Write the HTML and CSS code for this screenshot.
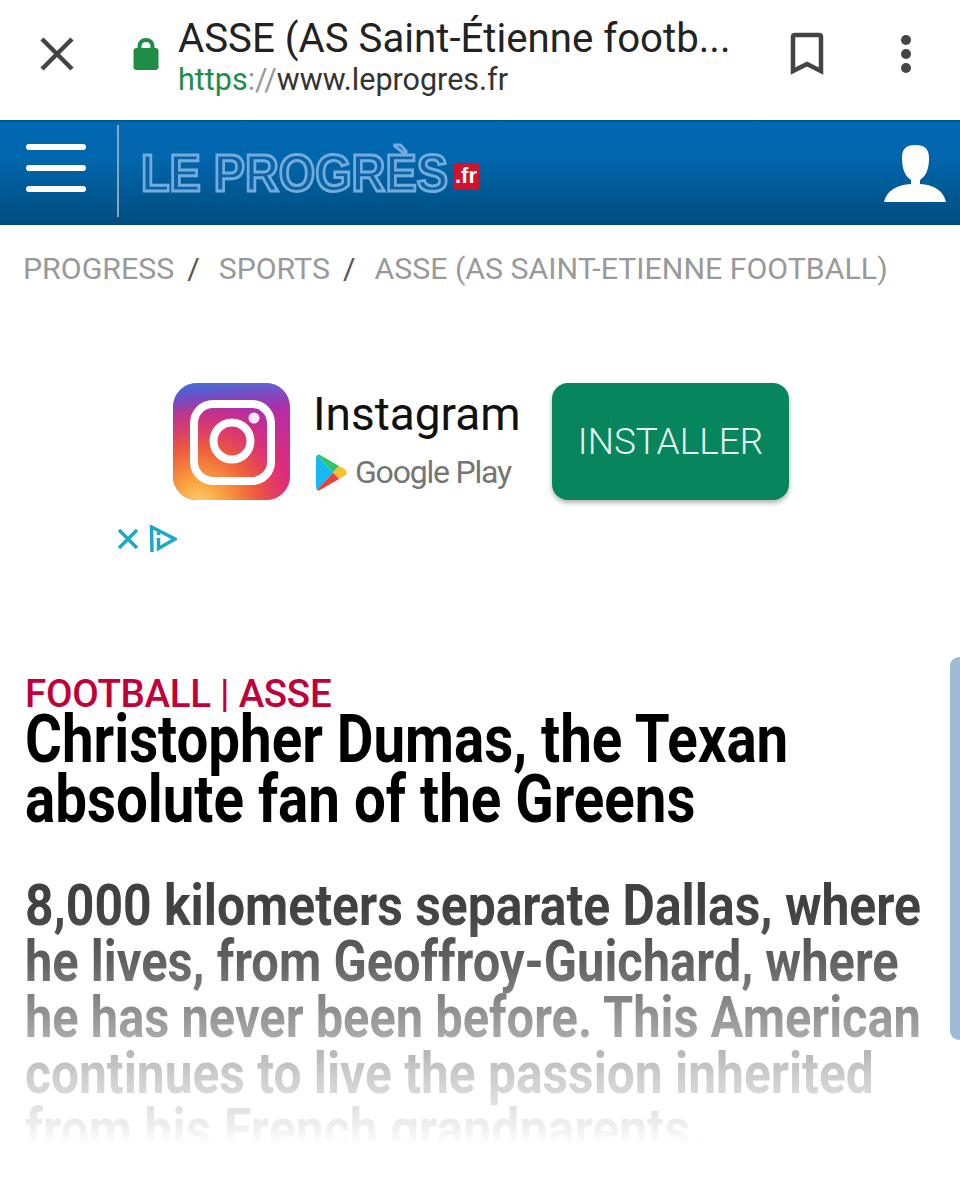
FILE: index.html
```html
<!DOCTYPE html>
<html>
<head>
  <meta charset="UTF-8">
  <title>ASSE (AS Saint-Étienne football)</title>
  <link rel="stylesheet" href="styles.css">
</head>
<body>
  <div class="toolbar">
    <svg class="icon-close" width="34" height="34" viewBox="0 0 34 34"><path d="M2 2 L32 32 M32 2 L2 32"/></svg>
    <svg class="icon-lock" width="26" height="33" viewBox="0 0 26 33">
      <path class="shackle" d="M6.5 13 V9.5 C6.5 5.5 9 3 13 3 C17 3 19.5 5.5 19.5 9.5 V13"/>
      <rect x="0.5" y="11" width="25" height="22" rx="3"/>
    </svg>
    <div class="toolbar-text">
      <div class="page-title">ASSE (AS Saint-Étienne footb...</div>
      <div class="page-url"><span class="scheme">https</span><span class="sep">://</span>www.leprogres.fr</div>
    </div>
    <svg class="icon-bookmark" width="34" height="44" viewBox="0 0 34 44"><path d="M3 39 V5 Q3 3 5 3 H29 Q31 3 31 5 V39 L17 32 Z"/></svg>
    <div class="dots"><span></span><span></span><span></span></div>
  </div>

  <header class="site-header">
    <div class="burger"><span></span><span></span><span></span></div>
    <div class="logo"><span class="logo-text">LE PROGRÈS</span><span class="logo-fr">.fr</span></div>
    <svg class="icon-user" width="62" height="58" viewBox="0 0 62 58">
      <path d="M31 0 C41 0 45 4 45 13 C45 24 42 31 36 35 V39 C50 40 59 45 62 57 H0 C3 45 13 40 27 39 V35 C21 31 18 24 18 13 C18 4 22 0 31 0 Z"/>
    </svg>
  </header>

  <nav class="breadcrumb">
    <a>PROGRESS</a><i>/</i><a>SPORTS</a><i>/</i><a>ASSE (AS SAINT-ETIENNE FOOTBALL)</a>
  </nav>

  <section class="ad">
    <div class="ad-row">
      <svg class="insta" width="117" height="117" viewBox="0 0 117 117">
        <defs>
          <linearGradient id="insta-base" x1="0.1" y1="0" x2="0.9" y2="0.75">
            <stop offset="0" stop-color="#5a4fcf"/>
            <stop offset="0.45" stop-color="#a32eb0"/>
            <stop offset="1" stop-color="#d42a8e"/>
          </linearGradient>
          <radialGradient id="insta-warm" cx="0.22" cy="1.05" r="1">
            <stop offset="0" stop-color="#fed373"/>
            <stop offset="0.22" stop-color="#f9a23c"/>
            <stop offset="0.5" stop-color="#ee5a3c"/>
            <stop offset="0.78" stop-color="#e22f70" stop-opacity="0.7"/>
            <stop offset="1" stop-color="#d42a8e" stop-opacity="0"/>
          </radialGradient>
          <linearGradient id="insta-top" x1="0" y1="0" x2="0" y2="0.25">
            <stop offset="0" stop-color="#3c7fdc" stop-opacity="0.7"/>
            <stop offset="1" stop-color="#5a4fcf" stop-opacity="0"/>
          </linearGradient>
        </defs>
        <rect width="117" height="117" rx="24" fill="url(#insta-base)"/>
        <rect width="117" height="117" rx="24" fill="url(#insta-warm)"/>
        <rect width="117" height="117" rx="24" fill="url(#insta-top)"/>
        <rect x="21" y="21" width="77" height="77" rx="19" class="insta-line"/>
        <circle cx="59" cy="58" r="18.5" class="insta-line"/>
        <circle cx="81" cy="35" r="5.5" fill="#fff" opacity="0.9"/>
      </svg>
      <div class="ad-text">
        <div class="ad-name">Instagram</div>
        <div class="ad-store">
          <svg width="31" height="37" viewBox="0 0 31 37">
            <path d="M1 1 L17 18.5 L1 36 Q0 35 0 33 V4 Q0 2 1 1 Z" fill="#16b9f4"/>
            <path d="M1 1 Q2 0 4 1 L23 12 L17 18.5 Z" fill="#2fc46b"/>
            <path d="M23 12 L30 16 Q31.5 18.5 30 21 L23 25 L17 18.5 Z" fill="#fbc02d"/>
            <path d="M1 36 Q2 37 4 36 L23 25 L17 18.5 Z" fill="#e8413e"/>
          </svg>
          <span>Google Play</span>
        </div>
      </div>
      <div class="ad-button">INSTALLER</div>
    </div>
    <div class="ad-badges">
      <svg width="22" height="22" viewBox="0 0 22 22"><path d="M2 2 L20 20 M20 2 L2 20"/></svg>
      <svg width="28" height="28" viewBox="0 0 28 28">
        <path d="M3 27 L2.5 2 L26 14 L9.5 23.5 V13"/>
        <path d="M9.5 7 V10"/>
      </svg>
    </div>
  </section>

  <article class="article">
    <div class="kicker">FOOTBALL | ASSE</div>
    <h1 class="headline">
      <span>Christopher Dumas, the Texan</span>
      <span>absolute fan of the Greens</span>
    </h1>
    <div class="lede">
      <span>8,000 kilometers separate Dallas, where</span>
      <span>he lives, from Geoffroy-Guichard, where</span>
      <span>he has never been before. This American</span>
      <span>continues to live the passion inherited</span>
      <span>from his French grandparents.</span>
    </div>
  </article>

  <div class="scroll-thumb"></div>
</body>
</html>
```

FILE: styles.css
```css
html, body { height: 1200px; overflow: hidden; }
body { margin: 0; background: #fff; font-family: Roboto, "Liberation Sans", sans-serif; color: #222; }

/* browser toolbar */
.toolbar { height: 120px; display: flex; align-items: center; box-sizing: border-box; padding-left: 40px; }
.icon-close { margin-top: -12px; flex: none; }
.icon-close path { fill: none; stroke: #444; stroke-width: 4.5; }
.icon-lock { margin: -14px 0 0 59px; flex: none; }
.icon-lock rect { fill: #1e8e47; }
.icon-lock .shackle { fill: none; stroke: #1e8e47; stroke-width: 4; }
.toolbar-text { margin-left: 19px; width: 589px; flex: none; }
.page-title { font-size: 40.2px; line-height: 44px; color: #222; white-space: nowrap; margin-top: -5px; }
.page-url { font-size: 30.5px; line-height: 38px; color: #333; }
.scheme { color: #1e8e47; }
.sep { color: #999; }
.icon-bookmark { margin: -12px 0 0 23px; flex: none; }
.icon-bookmark path { fill: none; stroke: #444; stroke-width: 4.5; }
.dots { margin: -12px 0 0 77px; display: flex; flex-direction: column; gap: 4px; }
.dots span { width: 10px; height: 10px; border-radius: 50%; background: #444; }

/* site header */
.site-header { height: 105px; display: flex; align-items: center; box-sizing: border-box; padding-left: 26px; background: linear-gradient(#0069b4 0%, #0066ad 35%, #004d7c 100%); border-top: 2px solid #00558a; }
.burger { width: 60px; display: flex; flex-direction: column; gap: 15px; flex: none; margin-top: -12px; filter: blur(0.6px); }
.burger span { height: 6px; border-radius: 3px; background: #fff; }
.logo { margin-left: 31px; border-left: 2px solid #8aa4ba; height: 92px; padding: 4px 0 0 22px; display: flex; align-items: center; flex: none; width: 767px; box-sizing: border-box; align-self: flex-start; margin-top: 3px; }
.logo-text { font-family: "Liberation Sans", sans-serif; font-weight: 700; font-size: 52px; color: #0d62a6; -webkit-text-stroke: 3px #72acdc; white-space: nowrap; transform: scaleX(0.9); transform-origin: left; margin-right: -34px; filter: blur(0.5px); }
.logo-fr { font-family: "Liberation Sans", sans-serif; font-weight: 700; font-size: 22px; color: #fff; background: #d0122b; border-radius: 3px; padding: 1px 2px 2px; margin: 6px 0 0 5px; line-height: 24px; }
.icon-user { fill: #fff; flex: none; }

/* breadcrumb */
.breadcrumb { height: 86px; padding-bottom: 2px; display: flex; align-items: center; padding-left: 23px; font-size: 30.3px; color: #999; white-space: nowrap; }
.breadcrumb i { font-style: normal; color: #555; margin: 0 19px 0 13px; }

/* ad block */
.ad { height: 363px; padding-top: 70px; box-sizing: border-box; }
.ad-row { display: flex; padding-left: 173px; height: 117px; }
.insta-line { fill: none; stroke: #fff; stroke-width: 8; }
.ad-text { margin-left: 23px; width: 239px; flex: none; }
.ad-name { font-size: 46px; line-height: 62px; color: #111; }
.ad-store { display: flex; align-items: center; margin-top: 8px; gap: 8px; margin-left: 3px; font-size: 32px; letter-spacing: -1.2px; color: #757575; }
.ad-button { width: 237px; height: 117px; display: flex; align-items: center; justify-content: center; border-radius: 16px; background: #07855d; color: #e6f5ef; font-size: 37px; font-weight: 300; box-shadow: 0 3px 5px rgba(0, 0, 0, 0.3); }
.ad-badges { display: flex; align-items: center; gap: 10px; margin: 25px 0 0 117px; }
.ad-badges path { fill: none; stroke: #1ba9c6; stroke-width: 3.5; }

/* article */
.article { padding-left: 25px; }
.kicker { font-size: 38.5px; font-weight: 500; line-height: 32px; padding-top: 2px; color: #c1003a; letter-spacing: -0.3px; white-space: nowrap; }
.headline { margin: 0; font-size: 66px; font-weight: 700; line-height: 60px; color: #000; }
.headline span { display: block; white-space: nowrap; transform: scaleX(0.855); transform-origin: left; }
.lede { position: relative; margin-top: 47px; font-size: 58px; font-weight: 700; line-height: 56px; color: #404040; }
.lede span { display: block; white-space: nowrap; transform: scaleX(0.85); transform-origin: left; }
.lede span:nth-child(1) { transform: scaleX(0.859); }
.lede span:nth-child(2) { transform: scaleX(0.842); }
.lede span:nth-child(3) { transform: scaleX(0.8415); }
.lede span:nth-child(4) { transform: scaleX(0.857); }
.lede span:nth-child(5) { transform: scaleX(0.863); }
.lede::after { content: ""; position: absolute; left: -25px; right: 0; top: 0; height: 285px; background: linear-gradient(rgba(255, 255, 255, 0) 10%, rgba(255, 255, 255, 0.18) 30%, rgba(255, 255, 255, 0.45) 49%, rgba(255, 255, 255, 0.73) 69%, rgba(255, 255, 255, 0.92) 88%, #fff 94%); }

.scroll-thumb { position: absolute; top: 657px; right: 0; width: 10px; height: 383px; background: #9fbad6; border-radius: 9px 0 0 9px; }
```
